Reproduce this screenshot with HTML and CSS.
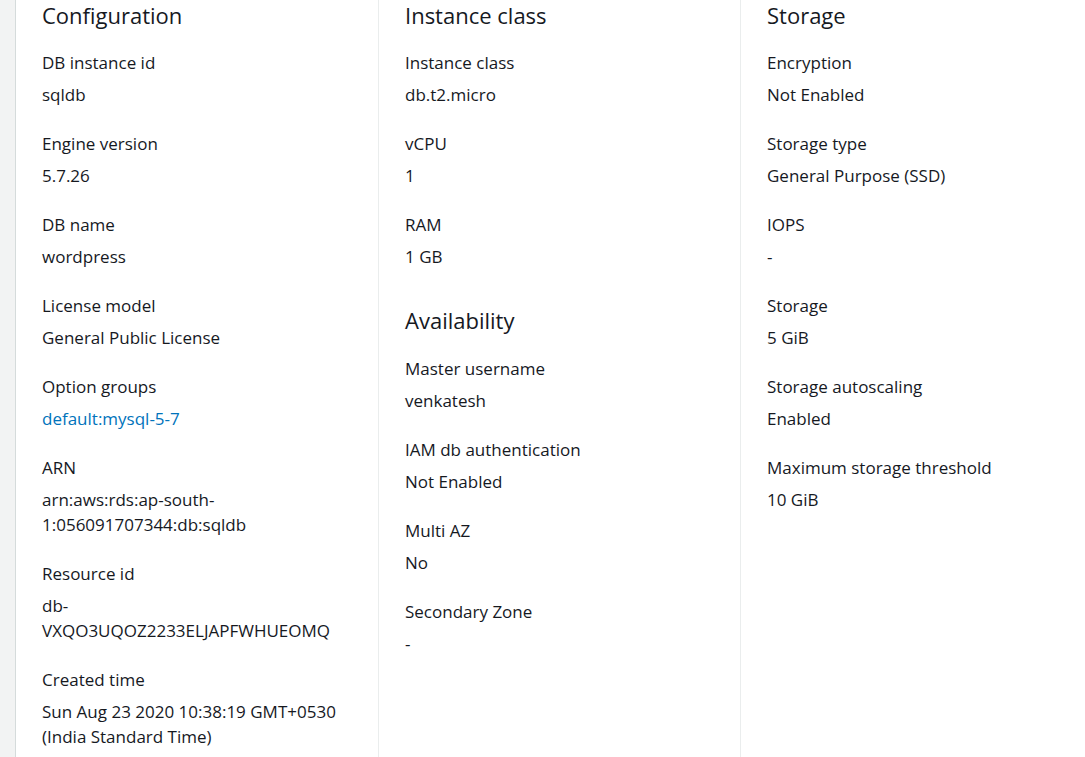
FILE: index.html
```html
<!DOCTYPE html>
<html lang="en">
<head>
<meta charset="utf-8">
<title>RDS Configuration</title>
<link rel="stylesheet" href="styles.css">
</head>
<body>
<div class="page">
  <div class="side"></div>
  <div class="panel">
    <div class="col">
      <section class="group">
        <h2 class="heading">Configuration</h2>
        <div class="item"><div class="label">DB instance id</div><div class="value">sqldb</div></div>
        <div class="item"><div class="label">Engine version</div><div class="value">5.7.26</div></div>
        <div class="item"><div class="label">DB name</div><div class="value">wordpress</div></div>
        <div class="item"><div class="label">License model</div><div class="value">General Public License</div></div>
        <div class="item"><div class="label">Option groups</div><div class="value"><a class="link" href="#">default:mysql-5-7</a></div></div>
        <div class="item"><div class="label">ARN</div><div class="value">arn:aws:rds:ap-south-<br>1:056091707344:db:sqldb</div></div>
        <div class="item"><div class="label">Resource id</div><div class="value">db-<br>VXQO3UQOZ2233ELJAPFWHUEOMQ</div></div>
        <div class="item"><div class="label">Created time</div><div class="value">Sun Aug 23 2020 10:38:19 GMT+0530<br>(India Standard Time)</div></div>
      </section>
    </div>
    <div class="col">
      <section class="group">
        <h2 class="heading">Instance class</h2>
        <div class="item"><div class="label">Instance class</div><div class="value">db.t2.micro</div></div>
        <div class="item"><div class="label">vCPU</div><div class="value">1</div></div>
        <div class="item"><div class="label">RAM</div><div class="value">1 GB</div></div>
      </section>
      <section class="group next">
        <h2 class="heading">Availability</h2>
        <div class="item"><div class="label">Master username</div><div class="value">venkatesh</div></div>
        <div class="item"><div class="label">IAM db authentication</div><div class="value">Not Enabled</div></div>
        <div class="item"><div class="label">Multi AZ</div><div class="value">No</div></div>
        <div class="item"><div class="label">Secondary Zone</div><div class="value">-</div></div>
      </section>
    </div>
    <div class="col">
      <section class="group">
        <h2 class="heading">Storage</h2>
        <div class="item"><div class="label">Encryption</div><div class="value">Not Enabled</div></div>
        <div class="item"><div class="label">Storage type</div><div class="value">General Purpose (SSD)</div></div>
        <div class="item"><div class="label">IOPS</div><div class="value">-</div></div>
        <div class="item"><div class="label">Storage</div><div class="value">5 GiB</div></div>
        <div class="item"><div class="label">Storage autoscaling</div><div class="value">Enabled</div></div>
        <div class="item"><div class="label">Maximum storage threshold</div><div class="value">10 GiB</div></div>
      </section>
    </div>
  </div>
</div>
</body>
</html>
```

FILE: styles.css
```css
* { box-sizing: border-box; }
html, body {
  margin: 0;
  padding: 0;
  background: #ffffff;
  overflow: hidden;
}
body {
  font-family: "Open Sans", "Noto Sans", "Liberation Sans", sans-serif;
  color: #16191f;
  font-size: 17px;
  line-height: 25px;
}
.page {
  display: flex;
  width: 1085px;
  height: 757px;
  overflow: hidden;
}
.side {
  flex: 0 0 16px;
  background: #f2f3f3;
  border-right: 1px solid #d5dbdb;
}
.panel {
  display: grid;
  grid-template-columns: 362px 362px 362px;
  flex: 0 0 auto;
}
.col {
  padding: 0 16px 0 26px;
}
.col + .col {
  border-left: 1px solid #eaeded;
}
.heading {
  margin: 0 0 20px;
  font-size: 22px;
  font-weight: 400;
  line-height: 30px;
}
.group.next {
  margin-top: 36px;
}
.group.next .heading {
  margin-bottom: 21px;
}
.item {
  margin-bottom: 24px;
}
.label {
  margin-bottom: 7px;
}
.link {
  color: #0073bb;
  text-decoration: none;
}
```
